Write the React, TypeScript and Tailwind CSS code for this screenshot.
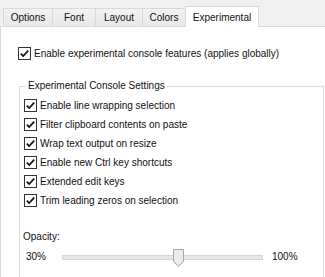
import React from "react";

const Check: React.FC = () => (
  <svg width="13" height="13" viewBox="0 0 13 13" className="shrink-0">
    <rect x="0.5" y="0.5" width="12" height="12" fill="#fff" stroke="#333" />
    <path d="M2.8 6.6 L5.2 9.1 L10.2 3.6" fill="none" stroke="#111" strokeWidth="1.7" />
  </svg>
);

const CheckRow: React.FC<{ label: string }> = ({ label }) => (
  <div className="flex items-center gap-[3px] h-[13px]">
    <Check />
    <span className="leading-[12px] whitespace-nowrap">{label}</span>
  </div>
);

const tabs = [
  { label: "Options", w: "w-[50px]" },
  { label: "Font", w: "w-[44px]" },
  { label: "Layout", w: "w-[48px]" },
  { label: "Colors", w: "w-[44px]" },
];

const groupItems = [
  "Enable line wrapping selection",
  "Filter clipboard contents on paste",
  "Wrap text output on resize",
  "Enable new Ctrl key shortcuts",
  "Extended edit keys",
  "Trim leading zeros on selection",
];

export default function App() {
  return (
    <div className="w-[325px] h-[277px] overflow-hidden bg-[#f0f0f0] font-['Liberation_Sans',Arial,sans-serif] text-[10px] text-[#111]">
      {/* Tab strip */}
      <div className="flex items-end h-[26px] pl-[3px]">
        {tabs.map((t, i) => (
          <div
            key={t.label}
            className={`${t.w} h-[18px] ${i > 0 ? "-ml-px" : ""} flex items-center justify-center border border-b-0 border-[#d9d9d9] bg-gradient-to-b from-[#f2f2f2] to-[#e8e8e8]`}
          >
            {t.label}
          </div>
        ))}
        <div className="w-[74px] h-[21px] -ml-px -mb-px relative z-10 flex items-start justify-center pt-[3px] border border-b-0 border-[#d9d9d9] bg-white">
          Experimental
        </div>
      </div>

      {/* Tab page */}
      <div className="h-full bg-white border-l border-t border-[#d9d9d9] pt-[20px] pl-[17px]">
        <CheckRow label="Enable experimental console features (applies globally)" />

        <fieldset className="mt-[20px] ml-[1px] w-[305px] h-[260px] border border-[#dcdcdc] pl-[4px] pt-[7px]">
          <legend className="ml-[2px] px-[2px] leading-[12px]">Experimental Console Settings</legend>
          <div className="flex flex-col gap-[6px]">
            {groupItems.map((g) => (
              <CheckRow key={g} label={g} />
            ))}
          </div>

          <div className="mt-[24px] -ml-px leading-[12px]">Opacity:</div>
          <div className="flex items-center mt-[5px] h-[18px]">
            <span className="w-[38px] pl-[2px] leading-[12px]">30%</span>
            <div className="relative w-[201px] h-[5px] bg-[#e7e7e7] border border-[#d6d6d6]">
              <svg width="11" height="18" viewBox="0 0 11 18" className="absolute left-[110px] top-[-7px]">
                <path d="M0.5 0.5 H10.5 V12.5 L5.5 17.3 L0.5 12.5 Z" fill="#ececec" stroke="#a6a6a6" />
              </svg>
            </div>
            <span className="ml-[9px] leading-[12px]">100%</span>
          </div>
        </fieldset>
      </div>
    </div>
  );
}
